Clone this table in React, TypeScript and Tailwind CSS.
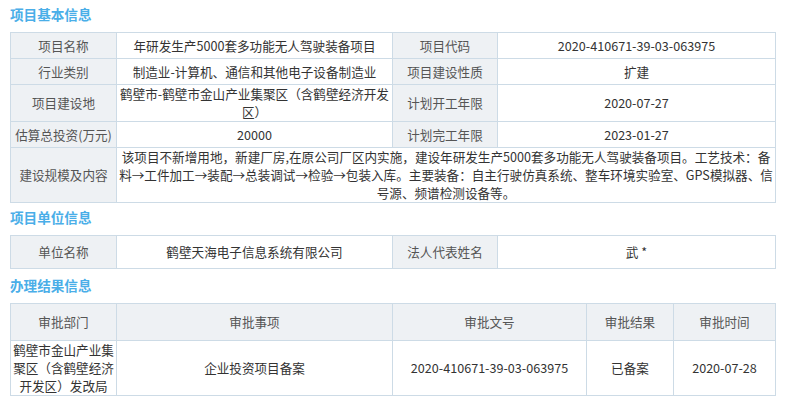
import React from "react";

const font = { fontFamily: '"Noto Sans CJK SC", "Noto Sans", sans-serif' };

function Title({ children, className = "" }: { children: React.ReactNode; className?: string }) {
  return (
    <div className={`h-5 leading-5 text-[13.6px] font-bold text-[#4aaee8] mb-2 ${className}`}>{children}</div>
  );
}

const lab = "border border-[#cddbe6] bg-[#eef1f4] text-[#555] text-center p-0 align-middle";
const val = "border border-[#cddbe6] bg-white text-[#333] text-center p-0 align-middle";

export default function App() {
  return (
    <div style={font} className="w-[785px] px-[10px] pt-1 text-[12.6px] leading-[18px] bg-white">
      <Title>项目基本信息</Title>
      <table className="w-[765px] table-fixed border-collapse">
        <colgroup>
          <col className="w-[106px]" />
          <col className="w-[276px]" />
          <col className="w-[105px]" />
          <col className="w-[278px]" />
        </colgroup>
        <tbody>
          <tr className="h-[26px]">
            <td className={lab}>项目名称</td>
            <td className={val}>年研发生产5000套多功能无人驾驶装备项目</td>
            <td className={lab}>项目代码</td>
            <td className={val}>2020-410671-39-03-063975</td>
          </tr>
          <tr className="h-[26px]">
            <td className={lab}>行业类别</td>
            <td className={val}>制造业-计算机、通信和其他电子设备制造业</td>
            <td className={lab}>项目建设性质</td>
            <td className={val}>扩建</td>
          </tr>
          <tr className="h-[37px]">
            <td className={lab}>项目建设地</td>
            <td className={val}>鹤壁市-鹤壁市金山产业集聚区（含鹤壁经济开发区）</td>
            <td className={lab}>计划开工年限</td>
            <td className={val}>2020-07-27</td>
          </tr>
          <tr className="h-[26px]">
            <td className={lab}>估算总投资(万元)</td>
            <td className={val}>20000</td>
            <td className={lab}>计划完工年限</td>
            <td className={val}>2023-01-27</td>
          </tr>
          <tr className="h-[55px]">
            <td className={lab}>建设规模及内容</td>
            <td colSpan={3} className={val}>
              该项目不新增用地，新建厂房,在原公司厂区内实施，建设年研发生产5000套多功能无人驾驶装备项目。工艺技术：备料→工件加工→装配→总装调试→检验→包装入库。主要装备：自主行驶仿真系统、整车环境实验室、GPS模拟器、信号源、频谱检测设备等。
            </td>
          </tr>
        </tbody>
      </table>

      <Title className="mt-1">项目单位信息</Title>
      <table className="w-[765px] table-fixed border-collapse">
        <colgroup>
          <col className="w-[106px]" />
          <col className="w-[276px]" />
          <col className="w-[105px]" />
          <col className="w-[278px]" />
        </colgroup>
        <tbody>
          <tr className="h-[33px]">
            <td className={lab}>单位名称</td>
            <td className={val}>鹤壁天海电子信息系统有限公司</td>
            <td className={lab}>法人代表姓名</td>
            <td className={val}>武 *</td>
          </tr>
        </tbody>
      </table>

      <Title className="mt-[6px]">办理结果信息</Title>
      <table className="w-[765px] table-fixed border-collapse">
        <colgroup>
          <col className="w-[106px]" />
          <col className="w-[276px]" />
          <col className="w-[194px]" />
          <col className="w-[87px]" />
          <col className="w-[102px]" />
        </colgroup>
        <tbody>
          <tr className="h-[37px]">
            <td className={lab}>审批部门</td>
            <td className={lab}>审批事项</td>
            <td className={lab}>审批文号</td>
            <td className={lab}>审批结果</td>
            <td className={lab}>审批时间</td>
          </tr>
          <tr className="h-[55px]">
            <td className={val}>鹤壁市金山产业集聚区（含鹤壁经济开发区）发改局</td>
            <td className={val}>企业投资项目备案</td>
            <td className={val}>2020-410671-39-03-063975</td>
            <td className={val}>已备案</td>
            <td className={val}>2020-07-28</td>
          </tr>
        </tbody>
      </table>
    </div>
  );
}
